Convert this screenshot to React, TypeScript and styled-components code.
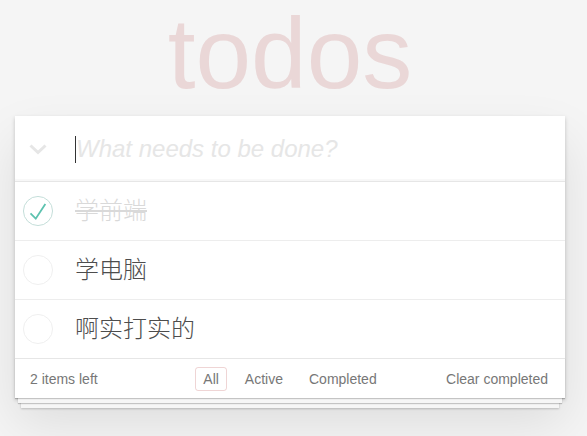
import React from 'react';
import styled, { createGlobalStyle } from 'styled-components';

const Global = createGlobalStyle`
  html, body { margin: 0; padding: 0; }
  body {
    background: #f5f5f5;
    color: #4d4d4d;
    font: 14px 'Liberation Sans', Arial, 'Noto Sans CJK SC', sans-serif;
    -webkit-font-smoothing: antialiased;
  }
`;

const Page = styled.div`
  width: 550px;
  padding: 3px 0 40px 15px;
`;

const Title = styled.h1`
  margin: 0 0 13px;
  height: 100px;
  font-size: 100px;
  line-height: 100px;
  font-weight: 100;
  text-align: center;
  color: rgba(175, 47, 47, 0.15);
`;

const TodoApp = styled.section`
  background: #fff;
  box-shadow: 0 2px 4px rgba(0, 0, 0, 0.2), 0 25px 50px rgba(0, 0, 0, 0.1);
`;

const Header = styled.header`
  display: flex;
  align-items: center;
  height: 65px;
  box-shadow: inset 0 -2px 1px rgba(0, 0, 0, 0.03);
`;

const ToggleAll = styled.label`
  width: 45px;
  height: 100%;
  display: flex;
  align-items: center;
  justify-content: center;
  padding-top: 2px;
  box-sizing: border-box;
`;

const InputArea = styled.div`
  flex: 1;
  height: 100%;
  display: flex;
  align-items: center;
  padding-left: 15px;
`;

const Caret = styled.span`
  width: 1px;
  height: 27px;
  margin-top: 1px;
  background: #333;
`;

const NewTodo = styled.input`
  flex: 1;
  height: 100%;
  border: none;
  outline: none;
  background: transparent;
  padding: 0 16px 0 0;
  font-family: inherit;
  font-size: 24px;
  font-weight: 300;
  color: #4d4d4d;
  &::placeholder {
    font-style: italic;
    font-weight: 300;
    color: #e6e6e6;
  }
`;

const List = styled.ul`
  list-style: none;
  margin: 0;
  padding: 0;
  border-top: 1px solid #e6e6e6;
`;

const Item = styled.li`
  display: flex;
  align-items: center;
  height: 58px;
  border-bottom: 1px solid #ededed;
  &:last-child {
    border-bottom: none;
  }
`;

const ToggleCell = styled.span`
  width: 46px;
  display: flex;
  justify-content: center;
  align-items: center;
`;

const Label = styled.span<{ $done?: boolean }>`
  flex: 1;
  padding: 15px 15px 15px 14px;
  font-family: 'Liberation Sans', 'Noto Sans CJK SC', sans-serif;
  font-size: 24px;
  line-height: 1.2;
  font-weight: 300;
  color: ${(p) => (p.$done ? '#d9d9d9' : '#4d4d4d')};
  text-decoration: ${(p) => (p.$done ? 'line-through' : 'none')};
`;

const Footer = styled.footer`
  display: grid;
  grid-template-columns: 1fr auto 1fr;
  align-items: center;
  height: 20px;
  padding: 8px 17px 11px 15px;
  border-top: 1px solid #e6e6e6;
  color: #777;
  font-size: 14px;
  box-shadow: 0 1px 1px rgba(0, 0, 0, 0.2), 0 8px 0 -3px #f6f6f6,
    0 9px 1px -3px rgba(0, 0, 0, 0.2), 0 16px 0 -6px #f6f6f6,
    0 17px 2px -6px rgba(0, 0, 0, 0.2);
`;

const Count = styled.span`
  justify-self: start;
  line-height: 20px;
`;

const Filters = styled.ul`
  display: flex;
  gap: 10px;
  list-style: none;
  margin: 0 0 0 2px;
  padding: 0;
`;

const FilterLink = styled.a<{ $selected?: boolean }>`
  display: block;
  padding: 3px 7px;
  border: 1px solid ${(p) => (p.$selected ? 'rgba(175, 47, 47, 0.2)' : 'transparent')};
  border-radius: 3px;
  color: inherit;
  text-decoration: none;
  line-height: 16px;
`;

const ClearButton = styled.button`
  justify-self: end;
  background: none;
  border: none;
  padding: 0;
  font: inherit;
  color: inherit;
  line-height: 20px;
  cursor: pointer;
`;

const Check = ({ done }: { done: boolean }) => (
  <svg width="30" height="30" viewBox="0 0 100 100">
    <circle cx="50" cy="50" r="48.5" fill="none" stroke={done ? '#bddad5' : '#ededed'} strokeWidth="3" />
    {done && <path fill="#5dc2af" d="M72 25L42 71 27 56l-4 4 20 20 34-52z" />}
  </svg>
);

const todos = [
  { text: '学前端', done: true },
  { text: '学电脑', done: false },
  { text: '啊实打实的', done: false },
];

export default function App() {
  return (
    <>
      <Global />
      <Page>
        <Title>todos</Title>
        <TodoApp>
          <Header>
            <ToggleAll>
              <svg width="18" height="11" viewBox="0 0 18 11">
                <polyline points="1.5,1.5 9,8.5 16.5,1.5" fill="none" stroke="#e6e6e6" strokeWidth="3" />
              </svg>
            </ToggleAll>
            <InputArea>
              <Caret />
              <NewTodo placeholder="What needs to be done?" />
            </InputArea>
          </Header>
          <List>
            {todos.map((t) => (
              <Item key={t.text}>
                <ToggleCell>
                  <Check done={t.done} />
                </ToggleCell>
                <Label $done={t.done}>{t.text}</Label>
              </Item>
            ))}
          </List>
          <Footer>
            <Count>2 items left</Count>
            <Filters>
              <li><FilterLink href="#/" $selected>All</FilterLink></li>
              <li><FilterLink href="#/active">Active</FilterLink></li>
              <li><FilterLink href="#/completed">Completed</FilterLink></li>
            </Filters>
            <ClearButton>Clear completed</ClearButton>
          </Footer>
        </TodoApp>
      </Page>
    </>
  );
}
